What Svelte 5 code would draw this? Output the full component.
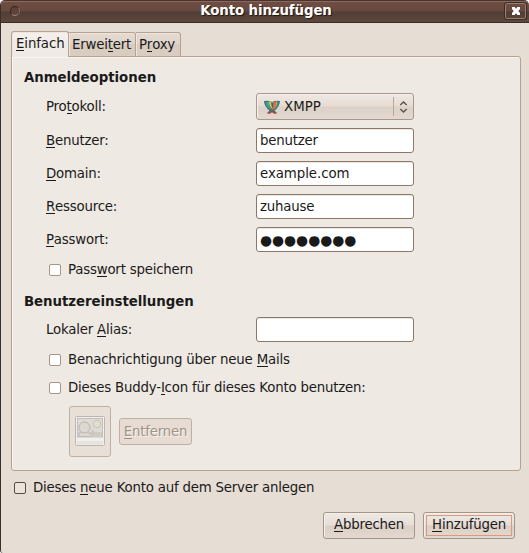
<script>
  const fields = [
    { pre: '', key: 'B', post: 'enutzer:', value: 'benutzer' },
    { pre: '', key: 'D', post: 'omain:', value: 'example.com', wide: true },
    { pre: '', key: 'R', post: 'essource:', value: 'zuhause' },
    { pre: '', key: 'P', post: 'asswort:', value: '●●●●●●●●', secret: true }
  ];
</script>

{#snippet label(pre, key, post)}<span class="label">{pre}<span class="key">{key}</span>{post}</span>{/snippet}

{#snippet check(pre, key, post)}
  <div class="check"><span class="box"></span>{@render label(pre, key, post)}</div>
{/snippet}

<div class="window">
  <header>
    <span class="dot"></span>
    <span class="title">Konto hinzufügen</span>
    <span class="close">
      <svg width="10" height="10" viewBox="0 0 10 10"><path d="M1 1H3.600L5 2.700 6.400 1H9V3L7.300 5 9 7V9H6.400L5 7.300 3.600 9H1V7L2.700 5 1 3Z" fill="#fff" /></svg>
    </span>
  </header>

  <main>
    <nav>
      <div class="tab active">{@render label('', 'E', 'infach')}</div>
      <div class="tab second">{@render label('Erwei', 't', 'ert')}</div>
      <div class="tab third">{@render label('P', 'r', 'oxy')}</div>
    </nav>

    <section class="pane">
      <h2>Anmeldeoptionen</h2>
      <div class="row combo-row">
        {@render label('Pro', 't', 'okoll:')}
        <div class="combo">
          <svg class="xmpp" width="16" height="14" viewBox="0 0 16 14">
            <path d="M0 1L3.500 .8 7.500 1.800 8 3 9 1.600 12.500 .8 16 1Q15.500 7 10.300 10.800L12.500 12.200V13.500H9.800L8 12.300 6.200 13.500H3.500V12.200L5.700 10.800Q.5 7 0 1Z" fill="#3d6a72" />
            <path d="M1.200 2L3.300 1.800Q3.600 7 7 10.300Q2 8 1.200 2Z" fill="#3c8fb0" />
            <path d="M2.600 1.800L5 1.800Q5 7 8 10.200Q3.600 8 2.600 1.800Z" fill="#4fae62" />
            <path d="M4.900 1.600L7 2.200Q7 6.500 9.200 9.600Q5.400 7.500 4.900 1.600Z" fill="#d7cf62" />
            <path d="M13 1.300L9.300 2Q9.800 7 7.500 10.600Q12.500 8 13 1.300Z" fill="#e5693a" />
            <path d="M12.300 1.500L13.500 1.600Q13 7 9.500 9.800Q12 6.500 12.300 1.500Z" fill="#a9bd55" />
            <path d="M15 2L13.500 1.700Q13 7 9.700 10.200Q14.300 7.500 15 2Z" fill="#399a94" />
            <path d="M3.800 12.800H5.800L7.600 11.300M12.200 12.800H10.200L8.600 11.500" fill="none" stroke="#c0473a" stroke-width="1.300" />
          </svg>
          <span class="combo-text">XMPP</span>
          <span class="arrows">
            <svg width="9" height="12" viewBox="0 0 9 12"><path d="M1.300 4L4.500 1 7.700 4M1.300 8L4.500 11 7.700 8" fill="none" stroke="#57504b" stroke-width="1.300" /></svg>
          </span>
        </div>
      </div>
      {#each fields as f}
        <div class="row">
          {@render label(f.pre, f.key, f.post)}
          <div class="entry" class:secret={f.secret} class:wide={f.wide}>{f.value}</div>
        </div>
      {/each}
      <div class="save">{@render check('Pass', 'w', 'ort speichern')}</div>

      <h2 class="settings">Benutzereinstellungen</h2>
      <div class="row alias">
        {@render label('Lokaler ', 'A', 'lias:')}
        <div class="entry"></div>
      </div>
      <div class="mail">{@render check('Benachrichtigung über neue ', 'M', 'ails')}</div>
      <div class="buddy">{@render check('Dieses Buddy-', 'I', 'con für dieses Konto benutzen:')}</div>
      <div class="icon-row">
        <div class="button picture">
          <svg width="30" height="31" viewBox="0 0 30 31">
            <rect x=".5" y=".5" width="29" height="29" rx="1" fill="#f1eeeb" stroke="#bdb6b0" />
            <rect x="2.500" y="2.500" width="25" height="18.500" fill="#dedad5" stroke="#c5c0ba" />
            <path d="M3 16H27V20.500H3Z" fill="#cfcac5" />
            <path d="M4 20.500V18Q5 15.500 8 16.500L12 16Q15 17 15.500 19L17.500 14.500 19 16 16.500 20.500Z" fill="#ddd7d1" stroke="#bdb6af" stroke-width=".8" />
            <circle cx="9.500" cy="11.500" r="5.500" fill="#ddd7d1" stroke="#b9b2ac" />
            <circle cx="22" cy="8" r="3.700" fill="#e3dfcf" stroke="#c9c4b7" />
            <path d="M2 25H28V28.500H2Z" fill="#e5e2df" />
          </svg>
        </div>
        <div class="button remove">{@render label('', 'E', 'ntfernen')}</div>
      </div>
    </section>

    <div class="server">{@render check('Dieses ', 'n', 'eue Konto auf dem Server anlegen')}</div>

    <footer>
      <div class="button">{@render label('', 'A', 'bbrechen')}</div>
      <div class="button default"><span class="focus">{@render label('', 'H', 'inzufügen')}</span></div>
    </footer>
  </main>
</div>

<style>
  :global(body) { background: #fff; }
  .window, .window * { box-sizing: border-box; }
  .window {
    width: 529px; height: 553px; overflow: hidden;
    display: flex; flex-direction: column;
    border-left: 1px solid #3b2f2c;
    border-radius: 5px 5px 0 3px;
    background: #e6ddd4;
    font: 13.333px/16px "DejaVu Sans", sans-serif;
    letter-spacing: -.2px;
    color: #1a1a1a;
    white-space: nowrap;
  }
  .key { box-shadow: 0 1px 0 currentColor; display: inline-block; height: 14px; line-height: 16px; vertical-align: top; }
  .label { display: inline-block; height: 16px; }

  header {
    height: 23px; flex: none; display: flex; align-items: center; justify-content: space-between;
    padding: 0 3px 0 9px; border-top: 1px solid #49332d; border-bottom: 1px solid #3a2c27;
    box-shadow: inset 0 1px #8a6a60;
    background: linear-gradient(#714d43 0, #674a40 45%, #513d34 55%, #5e483d 100%);
  }
  .dot { width: 10px; height: 10px; margin-top: -1px; border-radius: 50%; border: 1px solid #34241f; border-bottom-color: #a08a80; border-right-color: #85695f; background: #5d4339; }
  .title { font-weight: bold; letter-spacing: -.1px; color: #fff; text-shadow: 1px 1px 1px #1d1411; margin-left: 7px; margin-top: -2px; }
  .close { width: 21px; height: 16px; margin-top: -1px; border: 1px solid #988077; border-radius: 2px; outline: 1px solid #3b2a25; display: flex; align-items: center; justify-content: center; }

  main { flex: 1; padding: 8px 7px 0 10px; display: flex; flex-direction: column; }
  nav { height: 26px; display: flex; align-items: flex-end; position: relative; z-index: 1; }
  .tab {
    height: 25px; border: 1px solid #b7a291; border-left: 0; border-radius: 0 3px 0 0;
    background: linear-gradient(#e4dad0 0, #dfd4ca 48%, #d7cabe 52%, #d9cdc1 100%);
    padding: 4px 0 0 3px; box-shadow: inset 1px 1px #ede5de;
  }
  .active { height: 26px; width: 58px; padding-left: 4px; border: 1px solid #b7a291; border-bottom: 0; border-radius: 3px 3px 0 0; background: linear-gradient(#f5f0ec, #eee9e3); letter-spacing: -.1px; }
  .second { width: 67px; letter-spacing: -.2px; }
  .third { width: 45px; }

  .pane {
    height: 415px; flex: none; margin-top: -1px; width: 510px; padding: 13px 0 0 12px;
    border: 1px solid #b7a291; border-radius: 0 3px 3px 3px; background: #eee9e3; box-shadow: inset 1px 1px #f8f4f0;
    display: flex; flex-direction: column;
  }
  h2 { margin: 0; font-size: 13.333px; line-height: 16px; height: 16px; letter-spacing: -.04px; }
  .row { height: 25px; margin: 0 0 8px 22px; display: flex; align-items: center; flex: none; }
  .row > .label { width: 210px; height: 16px; }
  .combo-row { height: 27px; margin-top: 7px; }
  .entry { width: 158px; height: 25px; border: 1px solid #8f7767; border-radius: 3px; background: #fff; padding: 4px 3px 0; box-shadow: inset 0 1px #ebe7e3; }
  .wide { letter-spacing: -.05px; }
  .secret { font-size: 13.800px; letter-spacing: 0; padding-top: 4px; }
  .combo {
    width: 158px; height: 27px; border: 1px solid #a9978a; border-radius: 3px; display: flex; align-items: center;
    background: linear-gradient(#efe8e3 0, #e6dcd4 48%, #ddd1c7 52%, #e3d9d1 100%); box-shadow: inset 1px 1px #f5f0ec; padding-left: 7px;
  }
  .combo-text { margin: 0 0 0 4px; flex: 1; letter-spacing: 0; }
  .arrows { height: 19px; width: 20px; border-left: 1px solid #b7a79b; display: flex; align-items: center; padding-left: 5px; }

  .check { display: flex; align-items: center; height: 16px; }
  .box { width: 12px; height: 12px; border: 1px solid #a89686; border-radius: 2px; background: #fff; margin-right: 7px; }
  .save { margin: 2px 0 0 25px; }
  .settings { margin-top: 16px; }
  .alias { margin-top: 7px; }
  .mail { margin: 2px 0 0 25px; }
  .buddy { margin: 12px 0 0 25px; }
  .icon-row { display: flex; align-items: center; gap: 8px; margin: 10px 0 0 45px; }
  .button {
    width: 92px; height: 27px; border: 1px solid #a39588; border-radius: 3px;
    display: flex; align-items: center; justify-content: center; padding-bottom: 1px;
    background: linear-gradient(#efe8e3 0, #e7ded7 48%, #dccfc5 52%, #e3d9d0 100%); box-shadow: inset 1px 1px #f5f0ec;
  }
  .default { padding: 0; }
  .picture { width: 42px; height: 51px; background: #e8dfd7; border-color: #bfb0a4; box-shadow: none; }
  .remove { width: 73px; padding: 0; background: #e6dcd4; border-color: #bfb0a4; color: #a39384; text-shadow: 1px 1px #f8f4f0; box-shadow: none; }
  .server { margin: 9px 0 0 3px; }
  .server .box { background: #ebe4dd; border-color: #5d4a40; }
  footer { display: flex; justify-content: flex-end; gap: 8px; margin: 16px 7px 0 0; }
  .focus { width: 86px; height: 21px; padding-bottom: 1px; border: 1px solid #d99a80; display: flex; align-items: center; justify-content: center; }
</style>
